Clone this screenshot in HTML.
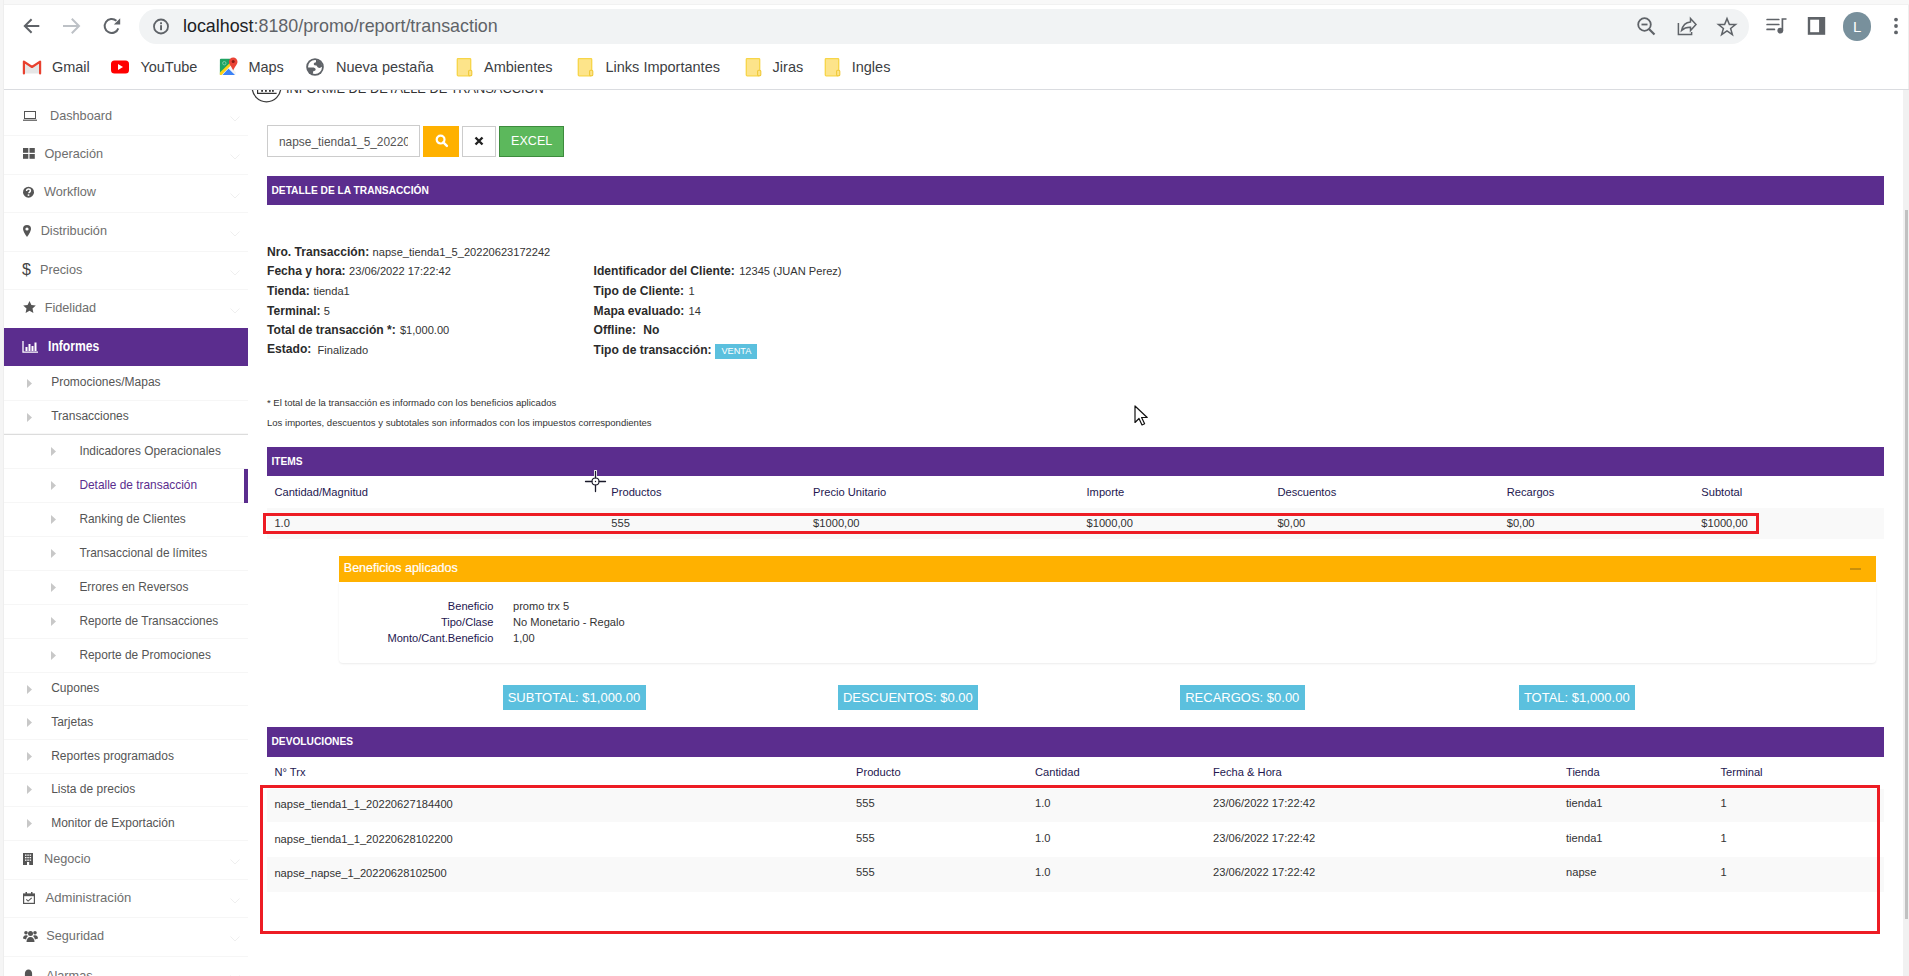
<!DOCTYPE html>
<html><head><meta charset="utf-8">
<style>
*{box-sizing:border-box;margin:0;padding:0}
html,body{width:1909px;height:976px;overflow:hidden;background:#fff;font-family:"Liberation Sans",sans-serif;position:relative}
.a{position:absolute;white-space:nowrap}
#frameTop{left:0;top:0;width:1909px;height:5px;background:#f8f8f8;border-bottom:1px solid #f1f1f1}
#frameLeft{left:0;top:0;width:4px;height:976px;background:#f5f5f5;border-right:1px solid #eeeeee}
#toolbar{left:4px;top:5px;width:1905px;height:84px;background:#fff}
#urlpill{left:139px;top:9px;width:1610px;height:35px;background:#f1f3f4;border-radius:18px}
#bmline{left:4px;top:89px;width:1905px;height:1px;background:#dadce0}
.bm{font-size:14.5px;line-height:20px;color:#3c4043;top:56.8px}
#sbtrack{left:1903px;top:90px;width:6px;height:886px;background:#f1f1f1}
#sbthumb{left:1905px;top:210px;width:3px;height:709px;background:#c1c1c1}
#content{left:248px;top:90px;width:1655px;height:886px;overflow:hidden}
#contentInner{position:absolute;left:-248px;top:-90px;width:1909px;height:976px}
</style></head><body>
<div class="a" id="content"><div id="contentInner">
<svg class="a" style="left:251px;top:72px" width="31" height="31" viewBox="0 0 31 31"><circle cx="15.5" cy="15.5" r="14.3" fill="none" stroke="#3a3a3a" stroke-width="1.3"/><path d="M6.6 10v11.3h19" fill="none" stroke="#333" stroke-width="1.2"/><g fill="#333"><rect x="10.2" y="15" width="1.8" height="4.8"/><rect x="14" y="15" width="1.8" height="4.8"/><rect x="18" y="15" width="1.8" height="4.8"/><rect x="21" y="15" width="1.8" height="4.8"/></g></svg>
<div class="a" style="left:286px;top:78.77px;font-size:12.8px;line-height:20px;color:#333;">INFORME DE DETALLE DE TRANSACCION</div>
<div class="a" style="left:267px;top:125px;width:153px;height:32px;border:1px solid #ccc;background:#fff;overflow:hidden"></div>
<div class="a" style="left:268px;top:126px;width:140px;height:30px;overflow:hidden"><div style="position:absolute;left:11px;top:5.5px;font-size:11.9px;line-height:20px;color:#555;white-space:nowrap">napse_tienda1_5_20220623172242</div></div>
<div class="a" style="left:423px;top:126px;width:36px;height:31px;background:#ffb100;"></div>
<svg class="a" style="left:435px;top:134px" width="14" height="14" viewBox="0 0 14 14"><circle cx="5.6" cy="5.6" r="3.9" fill="none" stroke="#fff" stroke-width="2.2"/><path d="M8.3 8.3l3.6 3.6" stroke="#fff" stroke-width="2.4" stroke-linecap="round"/></svg>
<div class="a" style="left:462px;top:126px;width:34px;height:31px;border:1px solid #ccc;background:#fff"></div>
<svg class="a" style="left:474px;top:136px" width="10" height="10" viewBox="0 0 10 10"><path d="M1.5 1.5l7 7M8.5 1.5l-7 7" stroke="#222" stroke-width="2.4"/></svg>
<div class="a" style="left:499px;top:126px;width:65px;height:31px;border:1px solid #3d8b3d;background:#5cb85c"></div>
<div class="a" style="left:511px;top:131.34px;font-size:12.6px;line-height:20px;color:#fff;">EXCEL</div>
<div class="a" style="left:267px;top:176px;width:1617px;height:29px;background:#5b2d8e;"></div>
<div class="a" style="left:271.5px;top:180.63px;font-size:10.2px;line-height:20px;color:#fff;font-weight:bold;">DETALLE DE LA TRANSACCIÓN</div>
<div class="a" style="left:267px;top:241.70px;font-size:12.1px;line-height:20px;color:#2b2b2b;font-weight:bold;">Nro. Transacción:</div>
<div class="a" style="left:372.6px;top:242.03px;font-size:11.1px;line-height:20px;color:#333;">napse_tienda1_5_20220623172242</div>
<div class="a" style="left:267px;top:260.70px;font-size:12.1px;line-height:20px;color:#2b2b2b;font-weight:bold;">Fecha y hora:</div>
<div class="a" style="left:349.1px;top:261.03px;font-size:11.1px;line-height:20px;color:#333;">23/06/2022 17:22:42</div>
<div class="a" style="left:267px;top:280.60px;font-size:12.1px;line-height:20px;color:#2b2b2b;font-weight:bold;">Tienda:</div>
<div class="a" style="left:313.4px;top:280.93px;font-size:11.1px;line-height:20px;color:#333;">tienda1</div>
<div class="a" style="left:267px;top:300.50px;font-size:12.1px;line-height:20px;color:#2b2b2b;font-weight:bold;">Terminal:</div>
<div class="a" style="left:323.7px;top:300.83px;font-size:11.1px;line-height:20px;color:#333;">5</div>
<div class="a" style="left:267px;top:319.90px;font-size:12.1px;line-height:20px;color:#2b2b2b;font-weight:bold;">Total de transacción *:</div>
<div class="a" style="left:399.9px;top:320.23px;font-size:11.1px;line-height:20px;color:#333;">$1,000.00</div>
<div class="a" style="left:267px;top:339.20px;font-size:12.1px;line-height:20px;color:#2b2b2b;font-weight:bold;">Estado:</div>
<div class="a" style="left:317.6px;top:339.53px;font-size:11.1px;line-height:20px;color:#333;">Finalizado</div>
<div class="a" style="left:593.6px;top:261.10px;font-size:12.1px;line-height:20px;color:#2b2b2b;font-weight:bold;">Identificador del Cliente:</div>
<div class="a" style="left:739.2px;top:261.43px;font-size:11.1px;line-height:20px;color:#333;">12345 (JUAN Perez)</div>
<div class="a" style="left:593.6px;top:280.60px;font-size:12.1px;line-height:20px;color:#2b2b2b;font-weight:bold;">Tipo de Cliente:</div>
<div class="a" style="left:688.5px;top:280.93px;font-size:11.1px;line-height:20px;color:#333;">1</div>
<div class="a" style="left:593.6px;top:300.50px;font-size:12.1px;line-height:20px;color:#2b2b2b;font-weight:bold;">Mapa evaluado:</div>
<div class="a" style="left:688.5px;top:300.83px;font-size:11.1px;line-height:20px;color:#333;">14</div>
<div class="a" style="left:593.6px;top:320.00px;font-size:12.1px;line-height:20px;color:#2b2b2b;font-weight:bold;">Offline:</div>
<div class="a" style="left:643.3px;top:320.00px;font-size:12.1px;line-height:20px;color:#2b2b2b;font-weight:bold;">No</div>
<div class="a" style="left:593.6px;top:339.70px;font-size:12.1px;line-height:20px;color:#2b2b2b;font-weight:bold;">Tipo de transacción:</div>
<div class="a" style="left:715px;top:344.3px;width:42px;height:14.7px;background:#5bc0de;"></div>
<div class="a" style="left:721.4px;top:340.66px;font-size:9.2px;line-height:20px;color:#fff;">VENTA</div>
<div class="a" style="left:267px;top:392.85px;font-size:9.54px;line-height:20px;color:#333;">* El total de la transacción es informado con los beneficios aplicados</div>
<div class="a" style="left:267px;top:412.65px;font-size:9.54px;line-height:20px;color:#333;">Los importes, descuentos y subtotales son informados con los impuestos correspondientes</div>
<div class="a" style="left:267px;top:447px;width:1617px;height:29px;background:#5b2d8e;"></div>
<div class="a" style="left:271.5px;top:451.63px;font-size:10.2px;line-height:20px;color:#fff;font-weight:bold;">ITEMS</div>
<div class="a" style="left:274.4px;top:482.11px;font-size:11.15px;line-height:20px;color:#24174f;">Cantidad/Magnitud</div>
<div class="a" style="left:611.3px;top:482.11px;font-size:11.15px;line-height:20px;color:#24174f;">Productos</div>
<div class="a" style="left:813.1px;top:482.11px;font-size:11.15px;line-height:20px;color:#24174f;">Precio Unitario</div>
<div class="a" style="left:1086.5px;top:482.11px;font-size:11.15px;line-height:20px;color:#24174f;">Importe</div>
<div class="a" style="left:1277.4px;top:482.11px;font-size:11.15px;line-height:20px;color:#24174f;">Descuentos</div>
<div class="a" style="left:1506.7px;top:482.11px;font-size:11.15px;line-height:20px;color:#24174f;">Recargos</div>
<div class="a" style="left:1701.3px;top:482.11px;font-size:11.15px;line-height:20px;color:#24174f;">Subtotal</div>
<div class="a" style="left:267px;top:508px;width:1617px;height:31px;background:#f9f9f9;"></div>
<div class="a" style="left:274.4px;top:513.11px;font-size:11.15px;line-height:20px;color:#333;">1.0</div>
<div class="a" style="left:611.3px;top:513.11px;font-size:11.15px;line-height:20px;color:#333;">555</div>
<div class="a" style="left:813.1px;top:513.11px;font-size:11.15px;line-height:20px;color:#333;">$1000,00</div>
<div class="a" style="left:1086.5px;top:513.11px;font-size:11.15px;line-height:20px;color:#333;">$1000,00</div>
<div class="a" style="left:1277.4px;top:513.11px;font-size:11.15px;line-height:20px;color:#333;">$0,00</div>
<div class="a" style="left:1506.7px;top:513.11px;font-size:11.15px;line-height:20px;color:#333;">$0,00</div>
<div class="a" style="left:1701.3px;top:513.11px;font-size:11.15px;line-height:20px;color:#333;">$1000,00</div>
<div class="a" style="left:263px;top:513px;width:1496px;height:21px;border:3px solid #ed1c24"></div>
<div class="a" style="left:339px;top:582px;width:1537px;height:81px;border-radius:0 0 4px 4px;box-shadow:0 1px 2px rgba(0,0,0,.08)"></div>
<div class="a" style="left:339px;top:556px;width:1537px;height:26px;background:#ffb100;"></div>
<div class="a" style="left:343.8px;top:557.87px;font-size:12.5px;line-height:20px;color:#fff;-webkit-text-stroke:0.2px #fff;">Beneficios aplicados</div>
<div class="a" style="left:1849.7px;top:567.5px;width:11px;height:2.5px;background:#c98f0a;"></div>
<div class="a" style="left:0px;top:596.13px;font-size:11.1px;line-height:20px;color:#24174f;width:493.5px;text-align:right;">Beneficio</div>
<div class="a" style="left:513px;top:596.13px;font-size:11.1px;line-height:20px;color:#333;">promo trx 5</div>
<div class="a" style="left:0px;top:611.83px;font-size:11.1px;line-height:20px;color:#24174f;width:493.5px;text-align:right;">Tipo/Clase</div>
<div class="a" style="left:513px;top:611.83px;font-size:11.1px;line-height:20px;color:#333;">No Monetario - Regalo</div>
<div class="a" style="left:0px;top:628.03px;font-size:11.1px;line-height:20px;color:#24174f;width:493.5px;text-align:right;">Monto/Cant.Beneficio</div>
<div class="a" style="left:513px;top:628.03px;font-size:11.1px;line-height:20px;color:#333;">1,00</div>
<div class="a" style="left:503px;top:685px;width:143px;height:25px;background:#5bc0de;"></div>
<div class="a" style="left:507.7px;top:687.70px;font-size:13px;line-height:20px;color:#fff;">SUBTOTAL: $1,000.00</div>
<div class="a" style="left:837.6px;top:685px;width:140px;height:25px;background:#5bc0de;"></div>
<div class="a" style="left:842.9px;top:687.70px;font-size:13px;line-height:20px;color:#fff;">DESCUENTOS: $0.00</div>
<div class="a" style="left:1180px;top:685px;width:125px;height:25px;background:#5bc0de;"></div>
<div class="a" style="left:1185.2px;top:687.70px;font-size:13px;line-height:20px;color:#fff;">RECARGOS: $0.00</div>
<div class="a" style="left:1518.6px;top:685px;width:116.2px;height:25px;background:#5bc0de;"></div>
<div class="a" style="left:1523.9px;top:687.70px;font-size:13px;line-height:20px;color:#fff;">TOTAL: $1,000.00</div>
<div class="a" style="left:267px;top:727px;width:1617px;height:30px;background:#5b2d8e;"></div>
<div class="a" style="left:271.5px;top:731.63px;font-size:10.2px;line-height:20px;color:#fff;font-weight:bold;">DEVOLUCIONES</div>
<div class="a" style="left:274.4px;top:761.91px;font-size:11.15px;line-height:20px;color:#24174f;">N° Trx</div>
<div class="a" style="left:856px;top:761.91px;font-size:11.15px;line-height:20px;color:#24174f;">Producto</div>
<div class="a" style="left:1035px;top:761.91px;font-size:11.15px;line-height:20px;color:#24174f;">Cantidad</div>
<div class="a" style="left:1213px;top:761.91px;font-size:11.15px;line-height:20px;color:#24174f;">Fecha &amp; Hora</div>
<div class="a" style="left:1566px;top:761.91px;font-size:11.15px;line-height:20px;color:#24174f;">Tienda</div>
<div class="a" style="left:1720.5px;top:761.91px;font-size:11.15px;line-height:20px;color:#24174f;">Terminal</div>
<div class="a" style="left:267px;top:789px;width:1617px;height:33px;background:#f9f9f9;"></div>
<div class="a" style="left:267px;top:857px;width:1617px;height:35px;background:#f9f9f9;"></div>
<div class="a" style="left:274.4px;top:794.11px;font-size:11.15px;line-height:20px;color:#333;">napse_tienda1_1_20220627184400</div>
<div class="a" style="left:856px;top:793.11px;font-size:11.15px;line-height:20px;color:#333;">555</div>
<div class="a" style="left:1035px;top:793.11px;font-size:11.15px;line-height:20px;color:#333;">1.0</div>
<div class="a" style="left:1213px;top:793.11px;font-size:11.15px;line-height:20px;color:#333;">23/06/2022 17:22:42</div>
<div class="a" style="left:1566px;top:793.11px;font-size:11.15px;line-height:20px;color:#333;">tienda1</div>
<div class="a" style="left:1720.5px;top:793.11px;font-size:11.15px;line-height:20px;color:#333;">1</div>
<div class="a" style="left:274.4px;top:828.91px;font-size:11.15px;line-height:20px;color:#333;">napse_tienda1_1_20220628102200</div>
<div class="a" style="left:856px;top:827.91px;font-size:11.15px;line-height:20px;color:#333;">555</div>
<div class="a" style="left:1035px;top:827.91px;font-size:11.15px;line-height:20px;color:#333;">1.0</div>
<div class="a" style="left:1213px;top:827.91px;font-size:11.15px;line-height:20px;color:#333;">23/06/2022 17:22:42</div>
<div class="a" style="left:1566px;top:827.91px;font-size:11.15px;line-height:20px;color:#333;">tienda1</div>
<div class="a" style="left:1720.5px;top:827.91px;font-size:11.15px;line-height:20px;color:#333;">1</div>
<div class="a" style="left:274.4px;top:862.91px;font-size:11.15px;line-height:20px;color:#333;">napse_napse_1_20220628102500</div>
<div class="a" style="left:856px;top:861.91px;font-size:11.15px;line-height:20px;color:#333;">555</div>
<div class="a" style="left:1035px;top:861.91px;font-size:11.15px;line-height:20px;color:#333;">1.0</div>
<div class="a" style="left:1213px;top:861.91px;font-size:11.15px;line-height:20px;color:#333;">23/06/2022 17:22:42</div>
<div class="a" style="left:1566px;top:861.91px;font-size:11.15px;line-height:20px;color:#333;">napse</div>
<div class="a" style="left:1720.5px;top:861.91px;font-size:11.15px;line-height:20px;color:#333;">1</div>
<div class="a" style="left:260px;top:785px;width:1620px;height:149px;border:3px solid #ed1c24"></div>
<svg class="a" style="left:1133.5px;top:404.5px" width="14" height="22" viewBox="0 0 14 22"><path d="M1 1v16.5l4-4 3 6.5 2.6-1.2-3-6.3h5.6z" fill="#fff" stroke="#111" stroke-width="1.2" stroke-linejoin="round"/></svg>
<svg class="a" style="left:584px;top:470px" width="23" height="23" viewBox="0 0 23 23"><g stroke="#fff" stroke-width="3" stroke-linecap="round"><path d="M11.5 1.2v6M11.5 15.8v6M1.2 11.5h6M15.8 11.5h6"/></g><circle cx="11.5" cy="11.5" r="3.6" fill="#fff" stroke="#fff" stroke-width="3"/><g stroke="#1a1a2a" stroke-width="1.3" stroke-linecap="round"><path d="M11.5 1.5v6.3M11.5 15.2v6.3M1.5 11.5h6.3M15.2 11.5h6.3"/></g><circle cx="11.5" cy="11.5" r="3.5" fill="none" stroke="#1a1a2a" stroke-width="1.1"/><circle cx="11.5" cy="11.5" r="0.7" fill="#1a1a2a"/></svg>

</div></div>
<div class="a" id="frameTop"></div>
<div class="a" id="frameLeft"></div>
<div class="a" id="toolbar"></div>
<div class="a" id="urlpill"></div>
<div class="a" style="left:1908px;top:5px;width:1px;height:85px;background:#eeeeee"></div>
<!-- chrome icons -->
<svg class="a" style="left:22px;top:16.6px" width="20" height="18" viewBox="0 0 20 18"><path d="M17.3 9H3M9.6 2.2L2.8 9l6.8 6.8" fill="none" stroke="#5f6368" stroke-width="2" stroke-linecap="butt"/></svg>
<svg class="a" style="left:62px;top:17px" width="20" height="18" viewBox="0 0 20 18"><path d="M2 9h14.5M10.5 2.5L17 9l-6.5 6.5" fill="none" stroke="#bdc1c6" stroke-width="2" stroke-linecap="square"/></svg>
<svg class="a" style="left:102px;top:17px" width="20" height="18" viewBox="0 0 20 18"><path d="M14.4 3.8A7 7 0 1 0 16.3 11.3" fill="none" stroke="#5f6368" stroke-width="2"/><path d="M18.2 1.3V7.6H11.9Z" fill="#5f6368"/></svg>
<svg class="a" style="left:152px;top:18px" width="18" height="18" viewBox="0 0 18 18"><circle cx="9" cy="8.5" r="7" fill="none" stroke="#5f6368" stroke-width="1.8"/><rect x="8.1" y="7.2" width="1.9" height="5" fill="#5f6368"/><rect x="8.1" y="4.3" width="1.9" height="1.9" fill="#5f6368"/></svg>
<div class="a" style="left:182.5px;top:15.2px;font-size:19px;transform:scaleX(0.94);transform-origin:0 0;line-height:22px;color:#202124">localhost<span style="color:#5f6368">:8180/promo/report/transaction</span></div>
<svg class="a" style="left:1636px;top:16px" width="22" height="22" viewBox="0 0 22 22"><circle cx="8.5" cy="8.5" r="6.3" fill="none" stroke="#5f6368" stroke-width="1.8"/><path d="M5.5 8.5h6" stroke="#5f6368" stroke-width="1.8"/><path d="M13 13l5.5 5.5" stroke="#5f6368" stroke-width="2.2"/></svg>
<svg class="a" style="left:1676px;top:16px" width="22" height="22" viewBox="0 0 22 22"><path d="M2.4 6.9V18.6H15.6V16" fill="none" stroke="#5f6368" stroke-width="1.5"/><path d="M14.5 2.4L20 8.5 14.5 14.5V11.2C10.5 11 7.8 12.3 5.6 14.4 6.6 9.6 9.6 6.3 14.5 5.9Z" fill="none" stroke="#5f6368" stroke-width="1.5" stroke-linejoin="miter"/></svg>
<svg class="a" style="left:1716px;top:16px" width="22" height="22" viewBox="0 0 22 22"><path d="M11 2.6l2.4 6h6.1l-4.9 3.9 1.8 6.1L11 14.9l-5.4 3.7 1.8-6.1-4.9-3.9h6.1z" fill="none" stroke="#5f6368" stroke-width="1.5" stroke-linejoin="miter"/></svg>
<svg class="a" style="left:1765px;top:17px" width="24" height="18" viewBox="0 0 24 18"><path d="M2.1 2.5h11.7M2.1 7.5h11.7M2.1 12.4h7.3" stroke="#5f6368" stroke-width="1.7" stroke-linecap="round"/><path d="M17.4 13.6V2h4.1" fill="none" stroke="#5f6368" stroke-width="1.7"/><circle cx="15.3" cy="13.6" r="2.9" fill="#5f6368"/></svg>
<svg class="a" style="left:1807px;top:16px" width="20" height="20" viewBox="0 0 20 20"><rect x="0.8" y="1" width="17.4" height="17.8" fill="#5f6368"/><rect x="3.2" y="3.7" width="8.9" height="12.5" fill="#fff"/></svg>
<div class="a" style="left:1842.5px;top:12px;width:28.5px;height:28.5px;border-radius:50%;background:#78909c"></div>
<div class="a" style="left:1853px;top:16.5px;font-size:15px;line-height:20px;color:#fff">L</div>
<svg class="a" style="left:1892px;top:17px" width="8" height="18" viewBox="0 0 8 18"><circle cx="4" cy="2.6" r="1.9" fill="#5f6368"/><circle cx="4" cy="9" r="1.9" fill="#5f6368"/><circle cx="4" cy="15.4" r="1.9" fill="#5f6368"/></svg>
<!-- bookmarks -->
<svg class="a" style="left:22px;top:59px" width="20" height="16" viewBox="0 0 20 16"><path d="M2.5 3.5L10 8.5 17.5 3.5V14.5H2.5z" fill="#e6e6e6"/><path d="M1.9 14.5V2.6L10 8 18.1 2.6V14.5" fill="none" stroke="#e8412f" stroke-width="2.2" stroke-linejoin="round" stroke-linecap="round"/></svg>
<div class="a bm" style="left:51.9px">Gmail</div>
<svg class="a" style="left:111px;top:60px" width="18" height="14" viewBox="0 0 18 14"><rect x="0" y="0.5" width="18" height="13" rx="3.5" fill="#ff0000"/><path d="M7 4v6l5-3z" fill="#fff"/></svg>
<div class="a bm" style="left:140.4px">YouTube</div>
<svg class="a" style="left:219px;top:57px" width="20" height="19" viewBox="0 0 20 19"><path d="M2 1.7H11.5V7.2L0.9 17.6V2.8Q0.9 1.7 2 1.7z" fill="#1ea362"/><path d="M0.9 15.6L11.6 5.3 12.8 7.4 2.6 17.9H0.9z" fill="#fcd116"/><path d="M3.4 17.9L9.6 11.4 16.2 17.9z" fill="#3c82f6"/><path d="M9.6 11.4L11.8 9.3 17.2 15.6 16.2 17.9z" fill="#f4f4f4"/><path d="M14.2 0.4A4.3 4.3 0 0 1 18.5 4.7C18.5 7.6 15.6 9.6 14.2 13.6 12.8 9.6 9.9 7.6 9.9 4.7A4.3 4.3 0 0 1 14.2 0.4z" fill="#ea4335"/><circle cx="14.2" cy="4.6" r="1.5" fill="#8a1a12"/><circle cx="5.3" cy="6.2" r="1.7" fill="none" stroke="#8fd4b0" stroke-width="0.8"/></svg>
<div class="a bm" style="left:248.4px">Maps</div>
<svg class="a" style="left:306px;top:58px" width="18" height="18" viewBox="0 0 18 18"><circle cx="9" cy="9" r="8.8" fill="#5f6368"/><circle cx="9" cy="9" r="7" fill="#fff"/><path d="M10 1.8V4.3Q8 4.6 7.6 6Q7.8 7.6 10.5 7.6Q11.5 9.9 13.2 9.9Q15 9.8 16.2 8.4A7.2 7.2 0 0 0 10 1.8Z" fill="#5f6368"/><path d="M1.8 9.4H7.6Q9.7 9.8 9.7 11.4Q9.6 12.9 7.4 13.1L6.6 16.5A7.2 7.2 0 0 1 1.8 9.4Z" fill="#5f6368"/></svg>
<div class="a bm" style="left:336px">Nueva pestaña</div>
<svg class="a" style="left:455.5px;top:58px" width="17" height="19" viewBox="0 0 17 19"><rect x="1.3" y="0.6" width="13.4" height="17.2" rx="0.8" fill="#fde48a" stroke="#f7d548" stroke-width="1.3"/><rect x="12.6" y="12.2" width="3.2" height="5.6" rx="1" fill="#fde48a" stroke="#f0c93a" stroke-width="1.1"/></svg>
<div class="a bm" style="left:484px">Ambientes</div>
<svg class="a" style="left:576.5px;top:58px" width="17" height="19" viewBox="0 0 17 19"><rect x="1.3" y="0.6" width="13.4" height="17.2" rx="0.8" fill="#fde48a" stroke="#f7d548" stroke-width="1.3"/><rect x="12.6" y="12.2" width="3.2" height="5.6" rx="1" fill="#fde48a" stroke="#f0c93a" stroke-width="1.1"/></svg>
<div class="a bm" style="left:605.5px">Links Importantes</div>
<svg class="a" style="left:745px;top:58px" width="17" height="19" viewBox="0 0 17 19"><rect x="1.3" y="0.6" width="13.4" height="17.2" rx="0.8" fill="#fde48a" stroke="#f7d548" stroke-width="1.3"/><rect x="12.6" y="12.2" width="3.2" height="5.6" rx="1" fill="#fde48a" stroke="#f0c93a" stroke-width="1.1"/></svg>
<div class="a bm" style="left:772.6px">Jiras</div>
<svg class="a" style="left:824px;top:58px" width="17" height="19" viewBox="0 0 17 19"><rect x="1.3" y="0.6" width="13.4" height="17.2" rx="0.8" fill="#fde48a" stroke="#f7d548" stroke-width="1.3"/><rect x="12.6" y="12.2" width="3.2" height="5.6" rx="1" fill="#fde48a" stroke="#f0c93a" stroke-width="1.1"/></svg>
<div class="a bm" style="left:851.7px">Ingles</div>

<div class="a" id="bmline"></div>
<div class="a" style="left:4px;top:135px;width:244px;height:1px;background:#f6f6f6"></div>
<div class="a" style="left:4px;top:173.5px;width:244px;height:1px;background:#f6f6f6"></div>
<div class="a" style="left:4px;top:212px;width:244px;height:1px;background:#f6f6f6"></div>
<div class="a" style="left:4px;top:250.5px;width:244px;height:1px;background:#f6f6f6"></div>
<div class="a" style="left:4px;top:289.2px;width:244px;height:1px;background:#f6f6f6"></div>
<svg class="a" style="left:23px;top:110.5px" width="14" height="10" viewBox="0 0 14 10"><rect x="1.5" y="0.5" width="11" height="7" fill="none" stroke="#555" stroke-width="1"/><rect x="0" y="8.6" width="14" height="1.2" fill="#555"/></svg>
<div class="a" style="left:50px;top:106.00px;font-size:12.7px;line-height:20px;color:#6e6e6e;">Dashboard</div>
<svg class="a" style="left:230px;top:115.6px" width="10" height="6" viewBox="0 0 10 6"><path d="M0.5 0.5L5 5 9.5 0.5" fill="none" stroke="#efefef" stroke-width="1"/></svg>
<svg class="a" style="left:23px;top:148px" width="12" height="11" viewBox="0 0 12 11"><rect x="0" y="0" width="5.3" height="4.8" fill="#555"/><rect x="6.5" y="0" width="5.3" height="4.8" fill="#555"/><rect x="0" y="6" width="5.3" height="4.8" fill="#555"/><rect x="6.5" y="6" width="5.3" height="4.8" fill="#555"/></svg>
<div class="a" style="left:44.5px;top:143.60px;font-size:12.7px;line-height:20px;color:#6e6e6e;">Operación</div>
<svg class="a" style="left:230px;top:154px" width="10" height="6" viewBox="0 0 10 6"><path d="M0.5 0.5L5 5 9.5 0.5" fill="none" stroke="#efefef" stroke-width="1"/></svg>
<svg class="a" style="left:23px;top:186px" width="11" height="12" viewBox="0 0 11 12"><circle cx="5.5" cy="6.2" r="5.5" fill="#555"/><path d="M3.6 4.9c0-1.2.8-1.9 1.9-1.9s1.9.7 1.9 1.7c0 1.3-1.5 1.4-1.5 2.5" fill="none" stroke="#fff" stroke-width="1.5"/><rect x="4.7" y="8.3" width="1.6" height="1.6" fill="#fff"/></svg>
<div class="a" style="left:44px;top:182.20px;font-size:12.7px;line-height:20px;color:#6e6e6e;">Workflow</div>
<svg class="a" style="left:230px;top:192.5px" width="10" height="6" viewBox="0 0 10 6"><path d="M0.5 0.5L5 5 9.5 0.5" fill="none" stroke="#efefef" stroke-width="1"/></svg>
<svg class="a" style="left:23px;top:224.5px" width="8" height="12" viewBox="0 0 8 12"><path d="M4 0a4 4 0 0 1 4 4c0 2.5-4 8-4 8S0 6.5 0 4a4 4 0 0 1 4-4z" fill="#555"/><circle cx="4" cy="4" r="1.6" fill="#fff"/></svg>
<div class="a" style="left:40.7px;top:220.70px;font-size:12.7px;line-height:20px;color:#6e6e6e;">Distribución</div>
<svg class="a" style="left:230px;top:231px" width="10" height="6" viewBox="0 0 10 6"><path d="M0.5 0.5L5 5 9.5 0.5" fill="none" stroke="#efefef" stroke-width="1"/></svg>
<div class="a" style="left:22px;top:262px;font-size:16px;line-height:15px;color:#444">$</div>
<div class="a" style="left:40px;top:260.20px;font-size:12.7px;line-height:20px;color:#6e6e6e;">Precios</div>
<svg class="a" style="left:230px;top:269.5px" width="10" height="6" viewBox="0 0 10 6"><path d="M0.5 0.5L5 5 9.5 0.5" fill="none" stroke="#efefef" stroke-width="1"/></svg>
<svg class="a" style="left:22.5px;top:301px" width="13" height="12" viewBox="0 0 13 12"><path d="M6.5 0l1.9 4 4.4.5-3.3 3 .9 4.4-3.9-2.2-3.9 2.2.9-4.4L0.2 4.5 4.6 4z" fill="#555"/></svg>
<div class="a" style="left:44.7px;top:298.00px;font-size:12.7px;line-height:20px;color:#6e6e6e;">Fidelidad</div>
<svg class="a" style="left:230px;top:308.2px" width="10" height="6" viewBox="0 0 10 6"><path d="M0.5 0.5L5 5 9.5 0.5" fill="none" stroke="#efefef" stroke-width="1"/></svg>
<div class="a" style="left:4px;top:328px;width:244px;height:38px;background:#5b2d8e"></div>
<svg class="a" style="left:22px;top:340.5px" width="16" height="12" viewBox="0 0 16 12"><path d="M1 0v11.2h15" fill="none" stroke="#fff" stroke-width="1.3"/><rect x="3.5" y="6" width="2" height="4" fill="#fff"/><rect x="6.5" y="3" width="2" height="7" fill="#fff"/><rect x="9.5" y="5" width="2" height="5" fill="#fff"/><rect x="12.5" y="1.5" width="2" height="8.5" fill="#fff"/></svg>
<div class="a" style="left:47.5px;top:336.41px;font-size:14.5px;line-height:20px;color:#fff;font-weight:bold;transform:scaleX(0.838);transform-origin:0 0;">Informes</div>
<svg class="a" style="left:27px;top:379px" width="6" height="9" viewBox="0 0 6 9"><path d="M0 0l5 4.5L0 9z" fill="#c8c8c8"/></svg>
<div class="a" style="left:51.2px;top:371.83px;font-size:12px;line-height:20px;color:#555;">Promociones/Mapas</div>
<svg class="a" style="left:27px;top:413px" width="6" height="9" viewBox="0 0 6 9"><path d="M0 0l5 4.5L0 9z" fill="#c8c8c8"/></svg>
<div class="a" style="left:51.2px;top:405.83px;font-size:12px;line-height:20px;color:#555;">Transacciones</div>
<div class="a" style="left:4px;top:400px;width:244px;height:1px;background:#f6f6f6"></div>
<div class="a" style="left:4px;top:433px;width:244px;height:1px;background:#f7f7f7"></div>
<div class="a" style="left:4px;top:434px;width:244px;height:1px;background:#dcdcdc"></div>
<svg class="a" style="left:51px;top:446.5px" width="6" height="9" viewBox="0 0 6 9"><path d="M0 0l5 4.5L0 9z" fill="#c8c8c8"/></svg>
<div class="a" style="left:79.4px;top:441.27px;font-size:11.9px;line-height:20px;color:#555;">Indicadores Operacionales</div>
<div class="a" style="left:4px;top:468px;width:244px;height:1px;background:#f6f6f6"></div>
<svg class="a" style="left:51px;top:480.5px" width="6" height="9" viewBox="0 0 6 9"><path d="M0 0l5 4.5L0 9z" fill="#c8c8c8"/></svg>
<div class="a" style="left:79.4px;top:475.27px;font-size:11.9px;line-height:20px;color:#5b2d8e;">Detalle de transacción</div>
<div class="a" style="left:4px;top:502px;width:244px;height:1px;background:#f6f6f6"></div>
<svg class="a" style="left:51px;top:514.5px" width="6" height="9" viewBox="0 0 6 9"><path d="M0 0l5 4.5L0 9z" fill="#c8c8c8"/></svg>
<div class="a" style="left:79.4px;top:509.27px;font-size:11.9px;line-height:20px;color:#555;">Ranking de Clientes</div>
<div class="a" style="left:4px;top:536px;width:244px;height:1px;background:#f6f6f6"></div>
<svg class="a" style="left:51px;top:548.5px" width="6" height="9" viewBox="0 0 6 9"><path d="M0 0l5 4.5L0 9z" fill="#c8c8c8"/></svg>
<div class="a" style="left:79.4px;top:543.27px;font-size:11.9px;line-height:20px;color:#555;">Transaccional de límites</div>
<div class="a" style="left:4px;top:570px;width:244px;height:1px;background:#f6f6f6"></div>
<svg class="a" style="left:51px;top:582.5px" width="6" height="9" viewBox="0 0 6 9"><path d="M0 0l5 4.5L0 9z" fill="#c8c8c8"/></svg>
<div class="a" style="left:79.4px;top:577.27px;font-size:11.9px;line-height:20px;color:#555;">Errores en Reversos</div>
<div class="a" style="left:4px;top:604px;width:244px;height:1px;background:#f6f6f6"></div>
<svg class="a" style="left:51px;top:616.5px" width="6" height="9" viewBox="0 0 6 9"><path d="M0 0l5 4.5L0 9z" fill="#c8c8c8"/></svg>
<div class="a" style="left:79.4px;top:611.27px;font-size:11.9px;line-height:20px;color:#555;">Reporte de Transacciones</div>
<div class="a" style="left:4px;top:638px;width:244px;height:1px;background:#f6f6f6"></div>
<svg class="a" style="left:51px;top:650.5px" width="6" height="9" viewBox="0 0 6 9"><path d="M0 0l5 4.5L0 9z" fill="#c8c8c8"/></svg>
<div class="a" style="left:79.4px;top:645.27px;font-size:11.9px;line-height:20px;color:#555;">Reporte de Promociones</div>
<div class="a" style="left:4px;top:672px;width:244px;height:1px;background:#f6f6f6"></div>
<div class="a" style="left:244px;top:468.5px;width:4px;height:34px;background:#5b2d8e"></div>
<svg class="a" style="left:27px;top:684.5px" width="6" height="9" viewBox="0 0 6 9"><path d="M0 0l5 4.5L0 9z" fill="#c8c8c8"/></svg>
<div class="a" style="left:51.2px;top:678.23px;font-size:12px;line-height:20px;color:#555;">Cupones</div>
<div class="a" style="left:4px;top:705.3px;width:244px;height:1px;background:#f6f6f6"></div>
<svg class="a" style="left:27px;top:717.8px" width="6" height="9" viewBox="0 0 6 9"><path d="M0 0l5 4.5L0 9z" fill="#c8c8c8"/></svg>
<div class="a" style="left:51.2px;top:711.53px;font-size:12px;line-height:20px;color:#555;">Tarjetas</div>
<div class="a" style="left:4px;top:739.3px;width:244px;height:1px;background:#f6f6f6"></div>
<svg class="a" style="left:27px;top:751.8px" width="6" height="9" viewBox="0 0 6 9"><path d="M0 0l5 4.5L0 9z" fill="#c8c8c8"/></svg>
<div class="a" style="left:51.2px;top:745.53px;font-size:12px;line-height:20px;color:#555;">Reportes programados</div>
<div class="a" style="left:4px;top:772.7px;width:244px;height:1px;background:#f6f6f6"></div>
<svg class="a" style="left:27px;top:785.2px" width="6" height="9" viewBox="0 0 6 9"><path d="M0 0l5 4.5L0 9z" fill="#c8c8c8"/></svg>
<div class="a" style="left:51.2px;top:778.93px;font-size:12px;line-height:20px;color:#555;">Lista de precios</div>
<div class="a" style="left:4px;top:806.4px;width:244px;height:1px;background:#f6f6f6"></div>
<svg class="a" style="left:27px;top:818.9px" width="6" height="9" viewBox="0 0 6 9"><path d="M0 0l5 4.5L0 9z" fill="#c8c8c8"/></svg>
<div class="a" style="left:51.2px;top:812.63px;font-size:12px;line-height:20px;color:#555;">Monitor de Exportación</div>
<div class="a" style="left:4px;top:840.4px;width:244px;height:1px;background:#f6f6f6"></div>
<svg class="a" style="left:23px;top:852.8px" width="10" height="12" viewBox="0 0 10 12"><rect x="0" y="0" width="10" height="12" fill="#555"/><g fill="#fff"><rect x="2" y="1.5" width="1.5" height="1.3"/><rect x="4.3" y="1.5" width="1.5" height="1.3"/><rect x="6.6" y="1.5" width="1.5" height="1.3"/><rect x="2" y="4" width="1.5" height="1.3"/><rect x="4.3" y="4" width="1.5" height="1.3"/><rect x="6.6" y="4" width="1.5" height="1.3"/><rect x="2" y="6.5" width="1.5" height="1.3"/><rect x="4.3" y="6.5" width="1.5" height="1.3"/><rect x="6.6" y="6.5" width="1.5" height="1.3"/><rect x="4" y="9" width="2.2" height="3"/></g></svg>
<div class="a" style="left:44px;top:849.40px;font-size:12.7px;line-height:20px;color:#6e6e6e;">Negocio</div>
<svg class="a" style="left:230px;top:859.4px" width="10" height="6" viewBox="0 0 10 6"><path d="M0.5 0.5L5 5 9.5 0.5" fill="none" stroke="#efefef" stroke-width="1"/></svg>
<div class="a" style="left:4px;top:879.1px;width:244px;height:1px;background:#f6f6f6"></div>
<svg class="a" style="left:23px;top:891.6px" width="12" height="12" viewBox="0 0 12 12"><rect x="0.6" y="2" width="10.8" height="9.4" fill="none" stroke="#555" stroke-width="1.2"/><rect x="0.6" y="2" width="10.8" height="2.2" fill="#555"/><rect x="2.5" y="0" width="1.5" height="3" fill="#555"/><rect x="8" y="0" width="1.5" height="3" fill="#555"/><path d="M3.3 7.3l1.8 1.8 3.6-3.3" fill="none" stroke="#555" stroke-width="1.1"/></svg>
<div class="a" style="left:45.5px;top:887.97px;font-size:13.1px;line-height:20px;color:#6e6e6e;">Administración</div>
<svg class="a" style="left:230px;top:898.1px" width="10" height="6" viewBox="0 0 10 6"><path d="M0.5 0.5L5 5 9.5 0.5" fill="none" stroke="#efefef" stroke-width="1"/></svg>
<div class="a" style="left:4px;top:917.3px;width:244px;height:1px;background:#f6f6f6"></div>
<svg class="a" style="left:22.5px;top:929.8px" width="15" height="12" viewBox="0 0 15 12"><circle cx="7.5" cy="3.6" r="2.5" fill="#555"/><circle cx="3" cy="2.8" r="1.8" fill="#555"/><circle cx="12" cy="2.8" r="1.8" fill="#555"/><path d="M3.5 12c0-3 1.5-5 4-5s4 2 4 5z" fill="#555"/><path d="M0 8.5c0-2 1-3.3 3-3.3 1 0 1.5.3 2 .8-1 .8-1.7 2-1.9 3.5z" fill="#555"/><path d="M15 8.5c0-2-1-3.3-3-3.3-1 0-1.5.3-2 .8 1 .8 1.7 2 1.9 3.5z" fill="#555"/></svg>
<div class="a" style="left:46.3px;top:925.80px;font-size:12.7px;line-height:20px;color:#6e6e6e;">Seguridad</div>
<svg class="a" style="left:230px;top:936.3px" width="10" height="6" viewBox="0 0 10 6"><path d="M0.5 0.5L5 5 9.5 0.5" fill="none" stroke="#efefef" stroke-width="1"/></svg>
<div class="a" style="left:4px;top:956.3px;width:244px;height:1px;background:#f6f6f6"></div>
<svg class="a" style="left:23px;top:968.5px" width="11" height="12" viewBox="0 0 11 12"><path d="M5.5 0.5c2.2 0 3.6 1.8 3.6 4v3l1.6 2H0.3l1.6-2v-3c0-2.2 1.4-4 3.6-4z" fill="#555"/></svg>
<div class="a" style="left:46px;top:965.60px;font-size:12.7px;line-height:20px;color:#6e6e6e;">Alarmas</div>
<svg class="a" style="left:230px;top:975.3px" width="10" height="6" viewBox="0 0 10 6"><path d="M0.5 0.5L5 5 9.5 0.5" fill="none" stroke="#efefef" stroke-width="1"/></svg>
<div class="a" style="left:4px;top:995px;width:244px;height:1px;background:#f6f6f6"></div>

<div class="a" id="sbtrack"></div>
<div class="a" id="sbthumb"></div>
</body></html>
